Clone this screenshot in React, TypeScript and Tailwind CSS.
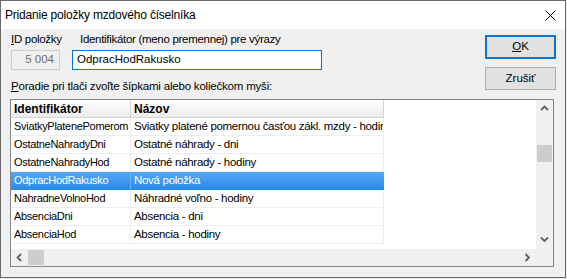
import React from "react";

const rows: [string, string][] = [
  ["SviatkyPlatenePomerom", "Sviatky platené pomernou časťou zákl. mzdy - hodiny"],
  ["OstatneNahradyDni", "Ostatné náhrady - dni"],
  ["OstatneNahradyHod", "Ostatné náhrady - hodiny"],
  ["OdpracHodRakusko", "Nová položka"],
  ["NahradneVolnoHod", "Náhradné voľno - hodiny"],
  ["AbsenciaDni", "Absencia - dni"],
  ["AbsenciaHod", "Absencia - hodiny"],
];

const Chevron = ({ dir }: { dir: "up" | "down" | "left" | "right" }) => {
  const pts: Record<string, string> = {
    up: "1,5 4.5,1.5 8,5",
    down: "1,1.5 4.5,5 8,1.5",
    left: "5,1 1.5,4.5 5,8",
    right: "1.5,1 5,4.5 1.5,8",
  };
  const vertical = dir === "up" || dir === "down";
  return (
    <svg
      width={vertical ? 9 : 7}
      height={vertical ? 7 : 9}
      viewBox={vertical ? "0 0 9 7" : "0 0 7 9"}
    >
      <polyline points={pts[dir]} fill="none" stroke="#606060" strokeWidth="1.8" />
    </svg>
  );
};

export default function App() {
  const font = { fontFamily: '"Liberation Sans", Arial, sans-serif' };
  return (
    <div className="w-[567px] h-[279px] bg-[#e8e8e8]" style={font}>
      <div className="w-[566px] h-[278px] border border-[#6a6a6a] bg-[#f0f0f0] flex flex-col text-black">
        {/* Title bar */}
        <div className="h-[28px] bg-white flex items-center justify-between pl-[4px] pr-[9px] shrink-0">
          <span className="text-[12px] tracking-[-0.2px] leading-[15px]">Pridanie položky mzdového číselníka</span>
          <svg width="11" height="11" viewBox="0 0 11 11">
            <path d="M0.5 0.5 L10.5 10.5 M10.5 0.5 L0.5 10.5" stroke="#000" strokeWidth="1" />
          </svg>
        </div>

        {/* Top section */}
        <div className="flex items-start">
          <div className="flex-1 pl-[10px] pt-[3px]">
            <div className="flex">
              <div className="w-[49px] flex flex-col">
                <span className="text-[11.5px] leading-[15px] tracking-[-0.3px] whitespace-nowrap">
                  <span className="underline">I</span>D položky
                </span>
                <div className="mt-[3px] h-[20px] border border-[#cccccc] bg-[#f0f0f0] text-[#6d6d6d] text-[11.5px] flex items-center justify-end pr-[5px]">
                  5 004
                </div>
              </div>
              <div className="ml-[12px] w-[250px] flex flex-col">
                <span className="pl-[8px] text-[11.5px] leading-[15px] tracking-[-0.3px] whitespace-nowrap">
                  Identifikátor (meno premennej) pre výrazy
                </span>
                <div className="mt-[3px] h-[20px] border border-[#0078d7] bg-white text-[11.5px] flex items-center pl-[4px]">
                  OdpracHodRakusko
                </div>
              </div>
            </div>
            <div className="mt-[9px] text-[11.5px] leading-[15px] tracking-[-0.2px] whitespace-nowrap">
              <span className="underline">P</span>oradie pri tlači zvoľte šípkami alebo koliečkom myši:
            </div>
          </div>
          <div className="w-[71px] mr-[9px] pt-[6px] flex flex-col">
            <div className="h-[24px] border-2 border-[#0078d7] bg-[#e1e1e1] flex items-center justify-center text-[11.5px]">
              <span>
                <span className="underline">O</span>K
              </span>
            </div>
            <div className="mt-[8px] h-[23px] border border-[#adadad] bg-[#e1e1e1] flex items-center justify-center text-[11.5px]">
              Zrušiť
            </div>
          </div>
        </div>

        {/* List */}
        <div className="ml-[9px] mt-[5px] w-[544px] h-[168px] border border-[#828790] bg-white flex flex-col">
          <div className="flex h-[149px]">
            <div className="w-[525px] flex flex-col text-[11px] tracking-[-0.3px]">
              <div className="flex h-[18px] w-[373px] bg-gradient-to-b from-white to-[#ececec] border-b border-[#d5d5d5] font-bold text-[12px] tracking-normal">
                <div className="w-[120px] border-r border-[#d5d5d5] pl-[3px] flex items-center">Identifikátor</div>
                <div className="w-[253px] border-r border-[#d5d5d5] pl-[3px] flex items-center">Názov</div>
              </div>
              {rows.map(([id, name], i) => {
                const sel = i === 3;
                return (
                  <div
                    key={id}
                    className={
                      sel
                        ? "flex h-[18px] w-[373px] bg-gradient-to-b from-[#55a7f5] to-[#2a8be8] text-white border-b border-[#2a8be8]"
                        : "flex h-[18px] w-[373px] border-b border-[#eeeeee]"
                    }
                  >
                    <div className={sel ? "w-[120px] border-r border-[#6fb4f4] pl-[3px] flex items-center whitespace-nowrap overflow-hidden" : "w-[120px] border-r border-[#eeeeee] pl-[3px] flex items-center whitespace-nowrap overflow-hidden"}>
                      {id}
                    </div>
                    <div className={sel ? "w-[253px] pl-[3px] flex items-center whitespace-nowrap overflow-hidden text-[11.5px]" : "w-[253px] border-r border-[#eeeeee] pl-[3px] flex items-center whitespace-nowrap overflow-hidden text-[11.5px]"}>
                      {name}
                    </div>
                  </div>
                );
              })}
            </div>
            <div className="w-[17px] bg-[#f0f0f0] flex flex-col items-center">
              <div className="h-[17px] flex items-center justify-center">
                <Chevron dir="up" />
              </div>
              <div className="mt-[28px] w-[15px] h-[17px] bg-[#cdcdcd]" />
              <div className="flex-1" />
              <div className="h-[17px] flex items-center justify-center mb-[1px]">
                <Chevron dir="down" />
              </div>
            </div>
          </div>
          <div className="flex h-[17px] bg-[#f0f0f0]">
            <div className="w-[525px] flex items-center">
              <div className="w-[17px] h-[17px] flex items-center justify-center">
                <Chevron dir="left" />
              </div>
              <div className="w-[16px] h-[15px] bg-[#cdcdcd]" />
              <div className="flex-1" />
              <div className="w-[17px] h-[17px] flex items-center justify-center">
                <Chevron dir="right" />
              </div>
            </div>
            <div className="w-[17px]" />
          </div>
        </div>
      </div>
    </div>
  );
}
